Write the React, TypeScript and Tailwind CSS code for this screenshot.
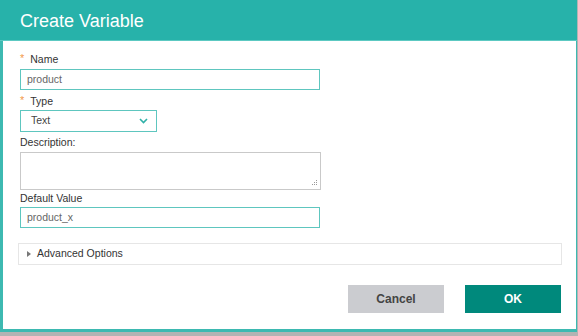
import React from "react";

function Label({ text, required }: { text: string; required?: boolean }) {
  return (
    <div className="h-[14px] flex items-center text-[10.5px] leading-[14px] text-[#333]">
      {required && <span className="text-[#f39a4c] mr-[6px] text-[11px] -mt-[2px]">*</span>}
      <span>{text}</span>
    </div>
  );
}

export default function App() {
  return (
    <div className="w-[578px] h-[336px] bg-[#b3b3b3]" style={{ fontFamily: '"Liberation Sans", Arial, sans-serif' }}>
      <div className="w-[577px] h-[332px] bg-white border-l-[3px] border-r border-b-[3px] border-[#3db9b1] flex flex-col">
        <div className="h-[41px] -ml-[3px] -mr-px bg-[#27b2aa] flex items-center pl-[20px] border-b border-[#5cc9c2]">
          <h1 className="text-white text-[18px] leading-none mt-[1px]">Create Variable</h1>
        </div>

        <div className="pl-[17px] pr-[15px] flex flex-col">
          <div className="mt-[11px]">
            <Label text="Name" required />
          </div>
          <div className="mt-[3px] w-[300px] h-[21px] border border-[#5ec6bf] flex items-center px-[6px] text-[10.5px] text-[#666]">
            product
          </div>

          <div className="mt-[4px]">
            <Label text="Type" required />
          </div>
          <div className="mt-[2px] w-[137px] h-[22px] border border-[#5ec6bf] flex items-center justify-between pl-[10px] pr-[8px] text-[10.5px] text-[#444]">
            <span>Text</span>
            <svg width="9" height="6" viewBox="0 0 9 6">
              <polyline points="1,1 4.5,4.5 8,1" fill="none" stroke="#2fb0a8" strokeWidth="1.6" />
            </svg>
          </div>

          <div className="mt-[3px]">
            <Label text="Description:" />
          </div>
          <div className="relative mt-[3px] w-[301px] h-[38px] border border-[#c9c9c9]">
            <svg className="absolute right-[2px] bottom-[2px]" width="7" height="7" viewBox="0 0 7 7">
              <rect x="5" y="0" width="1" height="1" fill="#999" />
              <rect x="5" y="2" width="1" height="1" fill="#999" />
              <rect x="3" y="2" width="1" height="1" fill="#999" />
              <rect x="5" y="4" width="1" height="1" fill="#999" />
              <rect x="3" y="4" width="1" height="1" fill="#999" />
              <rect x="1" y="4" width="1" height="1" fill="#999" />
            </svg>
          </div>

          <div className="mt-[1px]">
            <Label text="Default Value" />
          </div>
          <div className="mt-[2px] w-[300px] h-[21px] border border-[#5ec6bf] flex items-center px-[6px] text-[10.5px] text-[#666]">
            product_x
          </div>

          <div className="mt-[15px] -ml-[2px] w-[544px] h-[22px] border border-[#e6e6e6] flex items-center pl-[8px] text-[10.5px] text-[#333]">
            <svg width="4" height="6" viewBox="0 0 4 6" className="mr-[6px]">
              <polygon points="0,0 4,3 0,6" fill="#777" />
            </svg>
            <span>Advanced Options</span>
          </div>

          <div className="mt-[20px] flex justify-end gap-[21px]">
            <button className="w-[96px] h-[28px] bg-[#cbccd0] text-[#444] text-[12px] font-bold">Cancel</button>
            <button className="w-[96px] h-[28px] bg-[#00897c] text-white text-[12px] font-bold">OK</button>
          </div>
        </div>
      </div>
    </div>
  );
}
